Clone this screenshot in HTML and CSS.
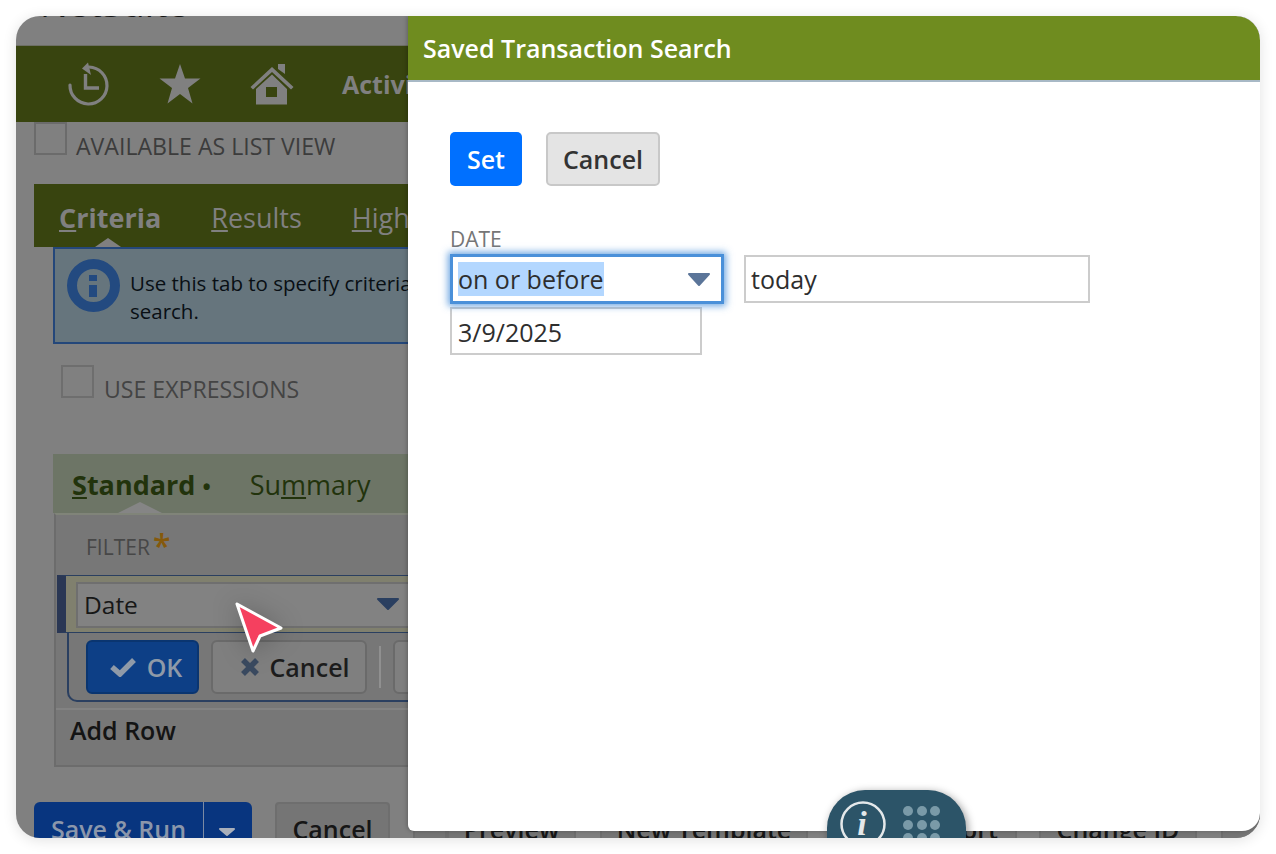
FILE: index.html
```html
<!DOCTYPE html>
<html lang="en">
<head>
  <meta charset="UTF-8">
  <title>Saved Transaction Search</title>
  <link rel="stylesheet" href="styles.css">
</head>
<body>
  <div class="frame">
    <div class="page">
      <div class="brand"><span>NetSuite</span></div>

      <div class="nav">
        <svg class="nav-icon icon-history" width="42" height="44" viewBox="0 0 42 44">
          <path d="M22 5A18.500 18.500 0 1 1 3 23" fill="none" stroke="#808080" stroke-width="3.200" stroke-linecap="round"/>
          <path d="M15 6.500L21 0.500L24 13Z" fill="#808080"/>
          <path d="M18.500 12V26H32" fill="none" stroke="#808080" stroke-width="3.400"/>
        </svg>
        <svg class="nav-icon icon-star" width="42" height="40" viewBox="0 0 42 40">
          <path d="M21 0L26 14.500H41.500L29 24L33.500 39.500L21 30L8.500 39.500L13 24L0.500 14.500H16Z" fill="#808080"/>
        </svg>
        <svg class="nav-icon icon-home" width="46" height="42" viewBox="0 0 46 42">
          <path d="M1.500 24L23 4L44.500 24L42 26.500L23 9L4 26.500Z" fill="#808080"/>
          <path d="M29 1H36V11L29 6Z" fill="#808080"/>
          <path fill-rule="evenodd" d="M7 26L23 11.500L38 26V41.500H7ZM17 24V34H28V24Z" fill="#808080"/>
        </svg>
        <span class="nav-link">Activity</span>
      </div>

      <div class="check-row check-list">
        <span class="checkbox"></span>
        <span class="check-label">AVAILABLE AS LIST VIEW</span>
      </div>

      <div class="tabs">
        <span class="tab tab-on"><u>C</u>riteria</span>
        <span class="tab"><u>R</u>esults</span>
        <span class="tab"><u>H</u>ighlighting</span>
      </div>

      <div class="notice">
        <span class="notice-icon"><span class="notice-i"></span></span>
        <p>Use this tab to specify criteria for your saved transaction<br>search.</p>
      </div>

      <div class="check-row check-expr">
        <span class="checkbox"></span>
        <span class="check-label">USE EXPRESSIONS</span>
      </div>

      <div class="subtabs">
        <span class="subtab subtab-on"><u>S</u>tandard <i>•</i></span>
        <span class="subtab">Su<u>m</u>mary</span>
      </div>

      <div class="panel">
        <div class="panel-head">FILTER<span class="req">*</span></div>
        <div class="edit-row">
          <div class="edit-select">
            <span>Date</span>
            <svg width="24" height="14" viewBox="0 0 24 14"><path d="M2 2H22L12 12Z" fill="#2a3f60" stroke="#2a3f60" stroke-width="2" stroke-linejoin="round"/></svg>
          </div>
        </div>
        <div class="edit-actions">
          <span class="btn-ok">
            <svg width="26" height="20" viewBox="0 0 26 20"><path d="M2 10L10 17L24 3" fill="none" stroke="#8f9aa8" stroke-width="5.500"/></svg>
            OK
          </span>
          <span class="btn-line">
            <svg width="20" height="20" viewBox="0 0 20 20"><path d="M3 3L17 17M17 3L3 17" fill="none" stroke="#3a4a60" stroke-width="5.500"/></svg>
            Cancel
          </span>
          <span class="sep"></span>
          <span class="btn-line btn-next">Copy</span>
        </div>
        <div class="add-row">Add Row</div>
      </div>

      <div class="bottom-bar">
        <span class="btn-save">
          <span class="save-text">Save &amp; Run</span>
          <span class="save-drop">
            <svg width="18" height="10" viewBox="0 0 18 10"><path d="M2 2H16L9 8Z" fill="#a9afba" stroke="#a9afba" stroke-width="2" stroke-linejoin="round"/></svg>
          </span>
        </span>
        <span class="btn-plain btn-cancel">Cancel</span>
        <span class="btn-plain btn-stub"></span>
        <span class="btn-plain btn-preview">Preview</span>
        <span class="btn-plain btn-template">New Template</span>
        <span class="btn-plain btn-report">Email Report</span>
        <span class="btn-plain btn-change">Change ID</span>
        <span class="btn-plain btn-last"></span>
      </div>
    </div>

    <svg class="pointer" width="56" height="60" viewBox="0 0 56 60">
      <path d="M4 3L48 27L27 35L20 50Z" fill="#f5405f" stroke="#fff" stroke-width="3" stroke-linejoin="round"/>
    </svg>

    <div class="modal">
      <div class="modal-head">Saved Transaction Search</div>
      <div class="modal-body">
        <div class="modal-buttons">
          <span class="btn-set">Set</span>
          <span class="btn-cancel-modal">Cancel</span>
        </div>
        <div class="field-label">DATE</div>
        <div class="field-row">
          <div class="select-focus">
            <span class="selected">on or before</span>
            <svg width="24" height="15" viewBox="0 0 24 15"><path d="M2 2H22L12 13Z" fill="#5b7599" stroke="#5b7599" stroke-width="2" stroke-linejoin="round"/></svg>
          </div>
          <div class="text-input input-today">today</div>
        </div>
        <div class="text-input input-date">3/9/2025</div>
      </div>
    </div>

    <div class="helper">
      <svg width="46" height="46" viewBox="0 0 46 46">
        <circle cx="23" cy="23" r="21.500" fill="none" stroke="#e4e8ea" stroke-width="2.500"/>
        <text x="22" y="34" text-anchor="middle" class="helper-i">i</text>
      </svg>
      <div class="dots">
        <span></span><span></span><span></span>
        <span></span><span></span><span></span>
        <span></span><span></span><span></span>
      </div>
    </div>
  </div>
</body>
</html>
```

FILE: styles.css
```css
* {
  box-sizing: border-box;
}
html, body {
  margin: 0;
  height: 100%;
  background: #fff;
}
body {
  padding: 16px;
  overflow: hidden;
  font-family: "Open Sans", sans-serif;
}
.frame {
  position: relative;
  width: 1244px;
  height: 822px;
  border-radius: 24px;
  overflow: hidden;
  background: #808080;
  box-shadow: 0 2px 14px rgba(0, 0, 0, 0.12);
}
.page {
  width: 1244px;
  height: 822px;
  overflow: hidden;
}

/* top of the page, mostly scrolled off */
.brand {
  height: 29px;
  padding-left: 24px;
  overflow: hidden;
  font-size: 37px;
  line-height: 40px;
  color: #141414;
}
.brand span {
  display: block;
  margin-top: -33px;
}
.nav {
  height: 77px;
  display: flex;
  align-items: center;
  background: #38440f;
  border-top: 1px solid #6d6f64;
  white-space: nowrap;
}
.nav-icon {
  flex: none;
}
.icon-history {
  margin-left: 51px;
}
.icon-star {
  margin-left: 50px;
}
.icon-home {
  margin-left: 48px;
}
.nav-link {
  margin-left: 47px;
  font-size: 25px;
  font-weight: 700;
  color: #808080;
}

.check-row {
  display: flex;
  color: #3c3c3c;
  font-size: 23.100px;
  white-space: nowrap;
}
.checkbox {
  width: 33px;
  height: 33px;
  border: 2px solid #6b6b6b;
  flex: none;
}
.check-label {
  margin-left: 9px;
  margin-top: 6px;
  line-height: 36px;
}
.check-list {
  height: 62px;
  padding-left: 18px;
}
.check-expr {
  height: 89px;
  margin-top: 21px;
  padding-left: 45px;
}
.check-expr .checkbox {
  border-color: #6e6e6e;
}
.check-expr .check-label {
  margin-left: 10px;
  margin-top: 6px;
  color: #444;
}

.tabs {
  position: relative;
  height: 63px;
  margin-left: 18px;
  padding: 14px 0 0 25px;
  display: flex;
  gap: 50px;
  background: #38440f;
  font-size: 27px;
  line-height: 40px;
  color: #808080;
  white-space: nowrap;
}
.tab-on {
  position: relative;
  font-weight: 700;
}
.tab-on::after {
  content: "";
  position: absolute;
  left: 36px;
  top: 40px;
  border: 13px solid transparent;
  border-top: 0;
  border-bottom: 9px solid #808080;
}

.notice {
  display: flex;
  height: 97px;
  margin-left: 37px;
  padding: 10px 0 0 12px;
  background: #66757d;
  border: 2px solid #24477a;
  border-right: 0;
  white-space: nowrap;
}
.notice-icon {
  position: relative;
  flex: none;
  width: 53px;
  height: 53px;
  border: 10px solid #234a80;
  border-radius: 50%;
}
.notice-i {
  position: absolute;
  left: 12px;
  top: 6px;
  width: 8px;
  height: 22px;
  background: linear-gradient(#234a80 6px, transparent 6px, transparent 10px, #234a80 10px);
}
.notice p {
  margin: 10px 0 0 10px;
  font-size: 20.500px;
  line-height: 28px;
  color: #090f14;
}

.subtabs {
  height: 59px;
  margin-left: 37px;
  padding: 11px 0 0 19px;
  display: flex;
  gap: 39px;
  background: #6d7566;
  font-size: 27px;
  line-height: 40px;
  color: #22330c;
  white-space: nowrap;
}
.subtab-on {
  position: relative;
  font-weight: 700;
}
.subtab-on::after {
  content: "";
  position: absolute;
  left: 46px;
  top: 37px;
  border: 22px solid transparent;
  border-top: 0;
  border-bottom: 11px solid #858585;
}
.subtab i {
  font-style: normal;
  font-size: 22px;
}

.panel {
  height: 254px;
  margin-left: 38px;
  background: #777;
  border: 2px solid #6c6c6c;
  border-top-color: #808479;
}
.panel-head {
  height: 60px;
  padding: 17px 0 0 30px;
  font-size: 21px;
  line-height: 30px;
  color: #474747;
}
.req {
  position: relative;
  top: 3px;
  margin-left: 3px;
  font-size: 32px;
  line-height: 20px;
  font-weight: 600;
  color: #85590c;
}
.edit-row {
  height: 58px;
  margin-left: 1px;
  padding: 6px 0 5px 10px;
  background: #80806e;
  border-left: 9px solid #2a3754;
  border-top: 1px solid #2a3f60;
  border-bottom: 1px solid #2a3f60;
}
.edit-select {
  display: flex;
  align-items: center;
  justify-content: space-between;
  width: 400px;
  height: 46px;
  padding: 0 74px 2px 6px;
  background: #828282;
  border: 2px solid #6f6f6f;
  font-size: 24.500px;
  color: #171717;
}
.edit-actions {
  display: flex;
  align-items: center;
  height: 69px;
  margin-left: 11px;
  padding-left: 17px;
  border-left: 2px solid #2a3f60;
  border-bottom: 2px solid #2a3f60;
  border-bottom-left-radius: 10px;
}
.btn-ok, .btn-line {
  display: flex;
  align-items: center;
  justify-content: center;
  height: 54px;
  border-radius: 6px;
  font-size: 25px;
  font-weight: 600;
  flex: none;
}
.btn-ok {
  width: 113px;
  padding-left: 7px;
  gap: 11px;
  background: #0d3f86;
  border: 2px solid #0a3570;
  color: #8f9aa8;
}
.btn-line {
  width: 156px;
  margin-left: 12px;
  padding-left: 12px;
  gap: 9px;
  background: #7f7f7f;
  border: 2px solid #6a6a6a;
  color: #1c1c1c;
}
.sep {
  width: 2px;
  height: 42px;
  margin-left: 12px;
  background: #909090;
  flex: none;
}
.btn-next {
  margin-left: 12px;
}
.add-row {
  height: 57px;
  margin-top: 6px;
  padding: 2px 0 0 14px;
  border-top: 2px solid #828282;
  font-size: 25px;
  font-weight: 600;
  line-height: 36px;
  color: #141414;
}

.bottom-bar {
  position: relative;
  display: flex;
  height: 40px;
  margin-top: 35px;
  padding-left: 18px;
  font-size: 25px;
  font-weight: 600;
  line-height: 54px;
  white-space: nowrap;
}
.btn-save {
  display: flex;
  width: 218px;
  height: 54px;
  background: #08357f;
  border-radius: 6px;
  color: #8b97ab;
  flex: none;
}
.save-text {
  width: 169px;
  text-align: center;
}
.save-drop {
  flex: 1;
  padding-left: 14px;
  line-height: 50px;
  border-left: 1px solid #7b8aa3;
}
.btn-plain {
  height: 54px;
  background: #757575;
  border: 2px solid #6e6e6e;
  border-radius: 4px;
  text-align: center;
  color: #161616;
  flex: none;
}
.btn-cancel {
  width: 115px;
  margin-left: 23px;
  line-height: 50px;
}
.btn-stub {
  width: 34px;
  margin-left: 23px;
}
.btn-preview {
  width: 129px;
  line-height: 50px;
}
.btn-template {
  width: 208px;
  margin-left: 24px;
  line-height: 50px;
}
.btn-report {
  width: 185px;
  margin-left: 24px;
  padding-right: 17px;
  line-height: 50px;
  text-align: right;
}
.btn-change {
  width: 158px;
  margin-left: 22px;
  line-height: 50px;
}
.btn-last {
  width: 60px;
  margin-left: 24px;
}

/* pointer from the recording */
.pointer {
  position: absolute;
  left: 217px;
  top: 585px;
  filter: drop-shadow(0 2px 12px rgba(0, 0, 0, 0.25));
}

/* popup over the page */
.modal {
  position: absolute;
  left: 392px;
  top: 0;
  right: 0;
  bottom: 7px;
  background: #fff;
  border-radius: 0 24px 18px 6px;
  box-shadow: -1px 0 4px rgba(0, 0, 0, 0.25);
  overflow: hidden;
}
.modal-head {
  height: 66px;
  padding-left: 15px;
  background: #6f8c1f;
  border-bottom: 2px solid #a8b9c6;
  font-size: 25px;
  font-weight: 600;
  line-height: 64px;
  color: #fff;
}
.modal-body {
  padding: 50px 0 0 42px;
}
.modal-buttons {
  display: flex;
  gap: 24px;
  height: 54px;
}
.btn-set, .btn-cancel-modal {
  display: block;
  height: 54px;
  border-radius: 5px;
  text-align: center;
  font-size: 25px;
  font-weight: 600;
}
.btn-set {
  width: 72px;
  background: #0070ff;
  line-height: 54px;
  color: #fff;
}
.btn-cancel-modal {
  width: 114px;
  background: #e4e4e4;
  border: 2px solid #c8c8c8;
  line-height: 50px;
  color: #333;
}
.field-label {
  margin-top: 39px;
  font-size: 21px;
  line-height: 29px;
  color: #767676;
}
.field-row {
  display: flex;
  align-items: center;
  gap: 20px;
}
.select-focus {
  display: flex;
  align-items: center;
  justify-content: space-between;
  width: 274px;
  height: 50px;
  padding: 0 10px 0 5px;
  border: 3px solid #4a90d9;
  box-shadow: 0 0 7px 2px rgba(74, 144, 217, 0.8);
  font-size: 25px;
  color: #2e2e2e;
}
.selected {
  background: #b3d7ff;
  line-height: 34px;
}
.text-input {
  height: 48px;
  padding-left: 6px;
  border: 2px solid #ccc;
  font-size: 25px;
  line-height: 46px;
  color: #2e2e2e;
}
.input-today {
  width: 346px;
  padding-left: 5px;
  line-height: 44px;
}
.input-date {
  width: 252px;
  margin-top: 3px;
}

/* round helper button, cut off by the frame */
.helper {
  position: absolute;
  left: 811px;
  top: 774px;
  width: 139px;
  height: 90px;
  display: flex;
  padding: 11px 0 0 13px;
  background: #2c5468;
  border-radius: 38px;
  box-shadow: 2px 2px 8px rgba(0, 0, 0, 0.4);
}
.helper svg {
  flex: none;
}
.helper-i {
  font-family: "Liberation Serif", serif;
  font-size: 34px;
  font-style: italic;
  font-weight: 700;
  fill: #e4e8ea;
}
.dots {
  display: grid;
  grid-template-columns: repeat(3, 10px);
  grid-auto-rows: 10px;
  gap: 3.500px;
  margin: 5px 0 0 17px;
}
.dots span {
  border-radius: 50%;
  background: #7a9aa8;
}
```
